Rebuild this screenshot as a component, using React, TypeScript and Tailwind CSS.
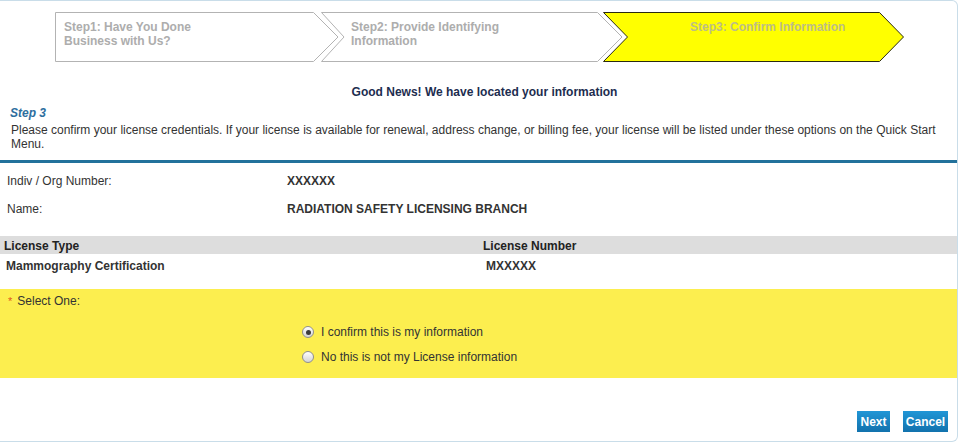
import React from 'react'

const font = { fontFamily: '"Liberation Sans", Arial, sans-serif' }

function StepShape({ points, fill, stroke }: { points: string; fill: string; stroke: string }) {
  return (
    <svg className="absolute inset-0 h-full w-full" preserveAspectRatio="none">
      <polygon points={points} fill={fill} stroke={stroke} strokeWidth="1" />
    </svg>
  )
}

function Radio({ checked }: { checked?: boolean }) {
  return (
    <span className="flex h-[12px] w-[12px] items-center justify-center rounded-full border border-[#8f8f8f] bg-gradient-to-b from-[#ffffff] to-[#d4d4d4]">
      {checked && <span className="h-[5px] w-[5px] rounded-full bg-[#3c3c3c]" />}
    </span>
  )
}

export default function App() {
  return (
    <div style={font} className="h-[443px] w-[960px] overflow-hidden bg-white text-[12px] text-[#333]">
      <div className="h-[442px] w-[958px] rounded-tr-[6px] rounded-br-[6px] border-t border-r border-b border-[#c9dde9]">
        {/* Step chevrons */}
        <div className="flex pl-[55px] pt-[11px]">
          <div className="relative h-[50px] w-[284px]">
            <StepShape points="0.5,0.5 258.5,0.5 283,25 258.5,49.5 0.5,49.5" fill="#ffffff" stroke="#b3b3b3" />
            <div className="relative pl-[9px] pt-[8px] font-bold leading-[14px] text-[#adadad]">
              Step1: Have You Done
              <br />
              Business with Us?
            </div>
          </div>
          <div className="relative -ml-[18px] h-[50px] w-[302px]">
            <StepShape points="0.5,0.5 276.5,0.5 301,25 276.5,49.5 0.5,49.5 23,25" fill="#ffffff" stroke="#b3b3b3" />
            <div className="relative pl-[30px] pt-[8px] font-bold leading-[14px] text-[#adadad]">
              Step2: Provide Identifying
              <br />
              Information
            </div>
          </div>
          <div className="relative -ml-[20px] h-[50px] w-[301px]">
            <StepShape points="0.5,0.5 276.5,0.5 300.5,25 276.5,49.5 0.5,49.5 24.5,25" fill="#ffff00" stroke="#2a2a10" />
            <div className="relative pl-[87px] pt-[8px] font-bold leading-[14px] text-[#bdbd86]">
              Step3: Confirm Information
            </div>
          </div>
        </div>

        <div className="mt-[23px] pl-[12px] text-center font-bold leading-[14px] text-[#1d2d4f]">
          Good News! We have located your information
        </div>

        <div className="mt-[7px] pl-[10px] font-bold italic leading-[14px] text-[#2e6e9e]">Step 3</div>
        <p className="pl-[11px] pr-[8px] pt-[3px] leading-[14px] text-[#333]">
          Please confirm your license credentials. If your license is available for renewal, address change, or billing fee, your license will be listed under these options on the Quick Start Menu.
        </p>

        <div className="mt-[9px] h-[3px] bg-[#22719b]" />

        <div className="mt-[11px] flex leading-[14px]">
          <div className="w-[287px] pl-[7px]">Indiv / Org Number:</div>
          <div className="font-bold">XXXXXX</div>
        </div>
        <div className="mt-[14px] flex leading-[14px]">
          <div className="w-[287px] pl-[7px]">Name:</div>
          <div className="font-bold">RADIATION SAFETY LICENSING BRANCH</div>
        </div>

        <div className="mt-[20px] flex h-[18px] items-center bg-[#dddddd] pt-[1px] font-bold text-[#222]">
          <div className="w-[483px] pl-[4px]">License Type</div>
          <div>License Number</div>
        </div>
        <div className="flex h-[24px] items-start pt-[5px] font-bold leading-[14px] text-[#333]">
          <div className="w-[486px] pl-[6px]">Mammography Certification</div>
          <div>MXXXXX</div>
        </div>

        <div className="mt-[11px] h-[89px] bg-[#fcee4f]">
          <div className="flex items-center pl-[8px] pt-[5px] leading-[14px]">
            <span className="mr-[5px] text-[11px] text-[#e0561b]">*</span>
            <span>Select One:</span>
          </div>
          <div className="mt-[17px] flex flex-col gap-[11px] pl-[302px]">
            <label className="flex items-center gap-[7px] leading-[14px]">
              <Radio checked />
              <span>I confirm this is my information</span>
            </label>
            <label className="flex items-center gap-[7px] leading-[14px]">
              <Radio />
              <span>No this is not my License information</span>
            </label>
          </div>
        </div>

        <div className="mt-[33px] flex justify-end gap-[13px] pr-[9px]">
          <button className="h-[21px] w-[33px] bg-gradient-to-b from-[#2196d6] to-[#1272ad] text-[12px] font-bold text-white">
            Next
          </button>
          <button className="h-[21px] w-[45px] bg-gradient-to-b from-[#2196d6] to-[#1272ad] text-[12px] font-bold text-white">
            Cancel
          </button>
        </div>
      </div>
    </div>
  )
}
